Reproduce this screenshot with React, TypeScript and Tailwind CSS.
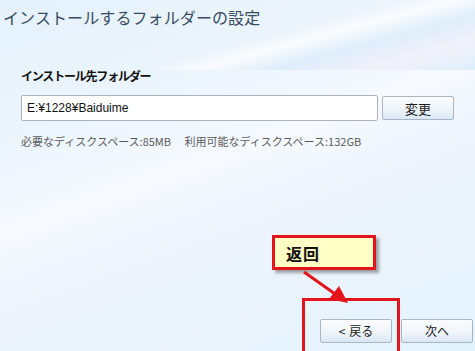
import React from "react";

const jp = "font-['Noto_Sans_CJK_JP','Liberation_Sans',sans-serif]";

function WinButton({ children }: { children: React.ReactNode }) {
  return (
    <button className="w-[72px] h-[24px] border border-[#a9b6c4] rounded-[2px] bg-[linear-gradient(180deg,#fbfcfe_0%,#f0f5fa_55%,#d9e7f4_100%)] text-[12px] leading-none text-[#1a1a1a] flex items-center justify-center">
      {children}
    </button>
  );
}

export default function App() {
  return (
    <div
      className={`relative w-[475px] h-[351px] overflow-hidden flex flex-col ${jp} bg-[linear-gradient(160deg,#e4f1fb_0%,#edf5fd_30%,#f6faff_45%,#edf4fd_60%,#eaf4fd_80%,#e2f3fd_100%)]`}
    >
      {/* header swoosh */}
      <div className="absolute left-0 top-0 w-[475px] h-[70px] bg-[linear-gradient(165deg,transparent_0%,transparent_55%,rgba(255,255,255,0.7)_62%,rgba(215,234,250,0.7)_72%,rgba(240,230,245,0.4)_85%,rgba(210,234,250,0.7)_100%)] pointer-events-none" />

      <h1 className="relative pl-[3px] pt-[7px] text-[16px] leading-[20px] text-[#384c60] tracking-[0.1px]">
        インストールするフォルダーの設定
      </h1>

      <div className="relative px-[21px] pt-[42px]">
        <div className="text-[12px] leading-[14px] font-bold text-[#111] tracking-[-1.2px]">
          インストール先フォルダー
        </div>
        <div className="mt-[12px] flex items-center gap-[4px]">
          <div className="w-[358px] h-[26px] border border-[#aab3bd] bg-white rounded-[2px] flex items-center pl-[5px] text-[12px] text-[#111] font-['Liberation_Sans','Noto_Sans_CJK_JP',sans-serif]">
            E:¥1228¥Baiduime
          </div>
          <WinButton>
            <span className="text-[13px]">変更</span>
          </WinButton>
        </div>
        <div className="mt-[13px] text-[11px] leading-[14px] text-[#5a5a5a] whitespace-pre">
          必要なディスクスペース:85MB　 利用可能なディスクスペース:132GB
        </div>
      </div>

      <div className="relative mt-auto flex justify-end gap-[9px] pr-[2px] pb-[8px]">
        <WinButton>
          <span className="mr-[4px]">&lt;</span>戻る
        </WinButton>
        <WinButton>次へ</WinButton>
      </div>

      {/* annotation: callout */}
      <div className="absolute left-[272px] top-[235px] w-[104px] h-[35px] border-[3px] border-[#e3141b] bg-[#ffffc6] shadow-[3px_3px_3px_rgba(0,0,0,0.35)] flex items-center pl-[11px]">
        <span className="text-[16px] font-bold text-[#111] tracking-[1px]">返回</span>
      </div>

      {/* annotation: red frame */}
      <div className="absolute left-[302px] top-[298px] w-[98px] h-[56px] border-[3px] border-[#e3141b]" />

      {/* annotation: arrow */}
      <svg className="absolute left-0 top-0 pointer-events-none" width="475" height="351">
        <line x1="304" y1="272" x2="338" y2="296" stroke="#e3141b" strokeWidth="3" />
        <polygon points="348,303 329,299 339,286" fill="#e3141b" />
      </svg>
    </div>
  );
}
